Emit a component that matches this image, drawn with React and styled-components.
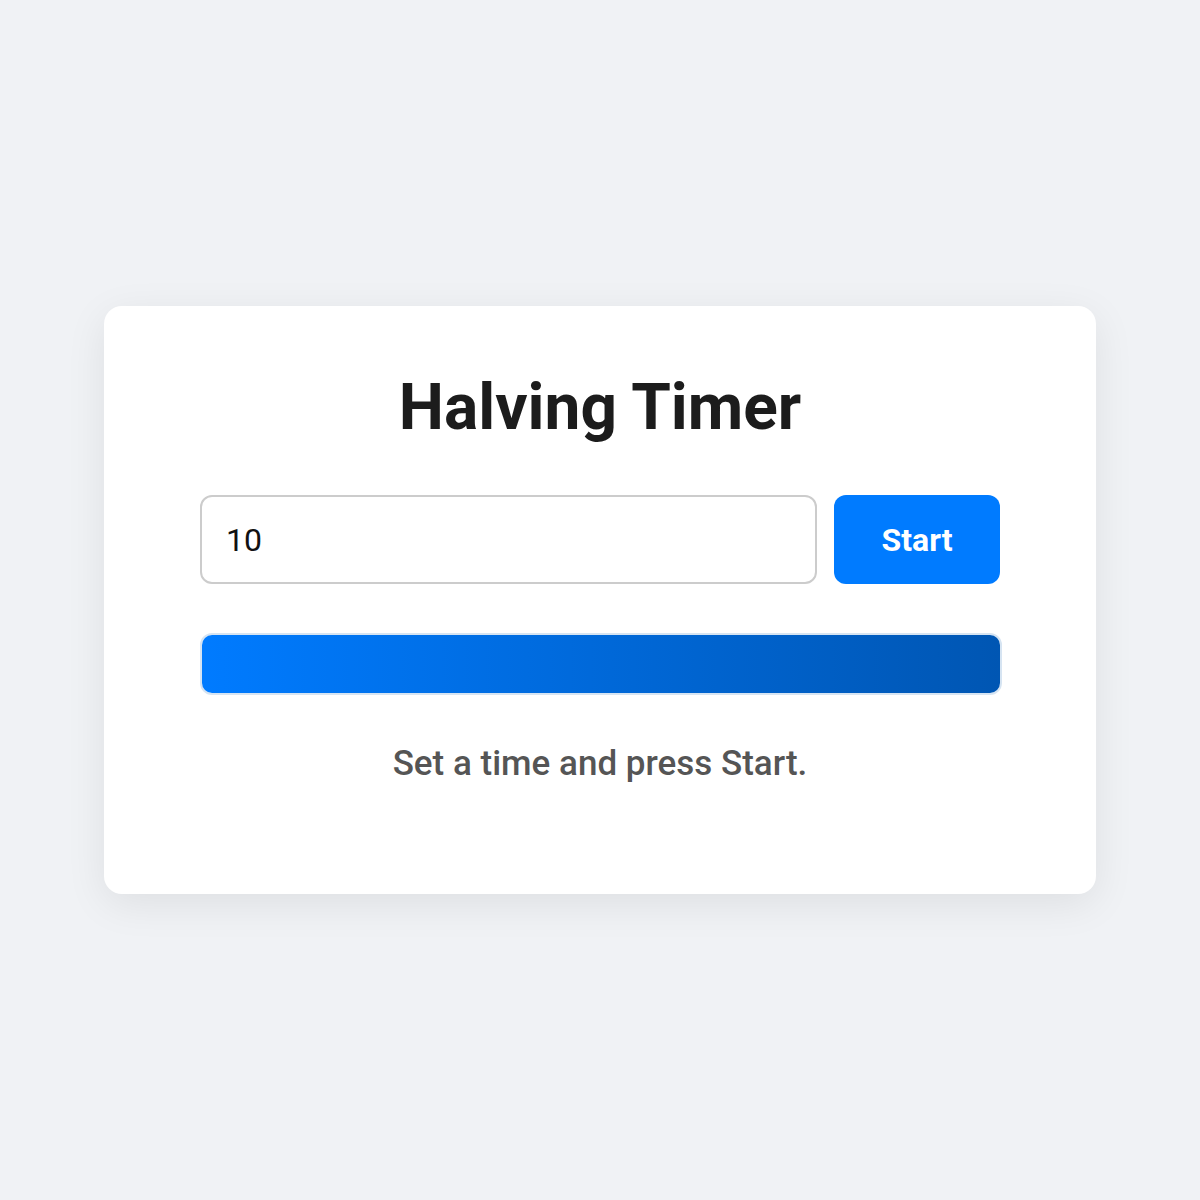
import React, { useState } from 'react';
import styled, { createGlobalStyle } from 'styled-components';

const GlobalStyle = createGlobalStyle`
  html, body {
    margin: 0;
    padding: 0;
    background: #f0f2f5;
    font-family: Roboto, "Liberation Sans", Arial, sans-serif;
  }
`;

const Page = styled.div`
  min-height: 1200px;
  display: flex;
  justify-content: center;
  align-items: center;
`;

const Card = styled.div`
  width: 992px;
  box-sizing: border-box;
  padding: 64px 96px 110px;
  background: #fff;
  border-radius: 18px;
  box-shadow: 0 10px 40px rgba(0, 0, 0, 0.08);
  display: flex;
  flex-direction: column;
  align-items: center;
`;

const Title = styled.h1`
  margin: 0 0 50px;
  font-size: 64px;
  font-weight: 700;
  color: #1c1c1c;
`;

const Row = styled.div`
  width: 100%;
  display: flex;
  gap: 17px;
`;

const TimeInput = styled.input`
  flex: 1;
  height: 89px;
  box-sizing: border-box;
  border: 2px solid #cccccc;
  border-radius: 12px;
  padding: 0 24px;
  font-family: Roboto, "Liberation Sans", Arial, sans-serif;
  font-size: 32px;
  color: #111;
  outline: none;
`;

const StartButton = styled.button`
  width: 166px;
  height: 89px;
  border: none;
  border-radius: 12px;
  background: #007bff;
  color: #fff;
  font-family: Roboto, "Liberation Sans", Arial, sans-serif;
  font-size: 32px;
  font-weight: 700;
  cursor: pointer;
`;

const Track = styled.div`
  width: calc(100% + 2px);
  align-self: flex-start;
  height: 62px;
  margin-top: 49px;
  box-sizing: border-box;
  border: 2px solid #d6e4f2;
  border-radius: 12px;
  overflow: hidden;
  background: #eef3f8;
`;

const Fill = styled.div`
  height: 100%;
  background: linear-gradient(90deg, #007bff, #0056b3);
`;

const Status = styled.p`
  margin: 48px 0 0;
  font-size: 35px;
  font-weight: 500;
  color: #555;
`;

export default function App() {
  const [seconds, setSeconds] = useState('10');
  const progress = 100;

  return (
    <>
      <GlobalStyle />
      <Page>
        <Card>
          <Title>Halving Timer</Title>
          <Row>
            <TimeInput
              type="number"
              value={seconds}
              onChange={(e) => setSeconds(e.target.value)}
            />
            <StartButton>Start</StartButton>
          </Row>
          <Track>
            <Fill style={{ width: `${progress}%` }} />
          </Track>
          <Status>Set a time and press Start.</Status>
        </Card>
      </Page>
    </>
  );
}
